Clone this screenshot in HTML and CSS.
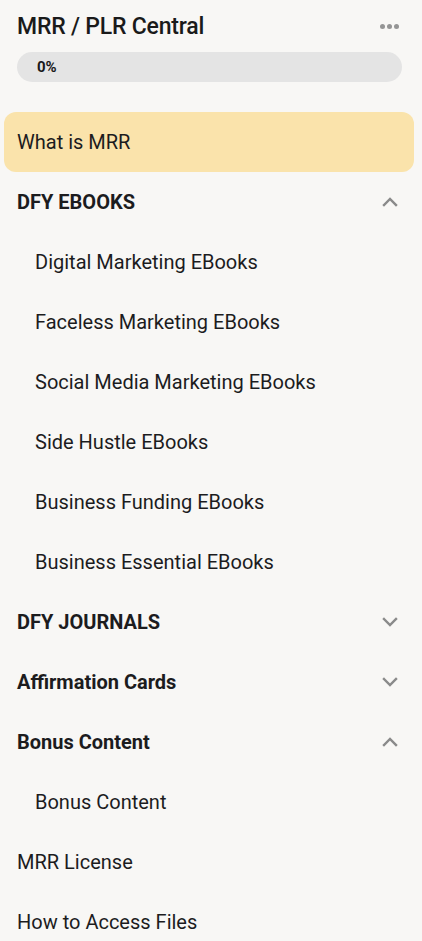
FILE: index.html
```html
<!DOCTYPE html>
<html>
<head>
<meta charset="utf-8">
<link rel="stylesheet" href="styles.css">
</head>
<body>
<div class="sidebar">
  <div class="header">
    <div class="title">MRR / PLR Central</div>
    <div class="more"><span></span><span></span><span></span></div>
  </div>
  <div class="progress"><span class="pct">0%</span></div>
  <nav class="nav">
    <div class="item active">What is MRR</div>
    <div class="item section"><span>DFY EBOOKS</span>
      <svg class="chev" viewBox="0 0 16 10" width="16" height="10"><path d="M2 8 L8 2 L14 8"/></svg>
    </div>
    <div class="item sub">Digital Marketing EBooks</div>
    <div class="item sub">Faceless Marketing EBooks</div>
    <div class="item sub">Social Media Marketing EBooks</div>
    <div class="item sub">Side Hustle EBooks</div>
    <div class="item sub">Business Funding EBooks</div>
    <div class="item sub">Business Essential EBooks</div>
    <div class="item section"><span>DFY JOURNALS</span>
      <svg class="chev" viewBox="0 0 16 10" width="16" height="10"><path d="M2 2 L8 8 L14 2"/></svg>
    </div>
    <div class="item section"><span>Affirmation Cards</span>
      <svg class="chev" viewBox="0 0 16 10" width="16" height="10"><path d="M2 2 L8 8 L14 2"/></svg>
    </div>
    <div class="item section"><span>Bonus Content</span>
      <svg class="chev" viewBox="0 0 16 10" width="16" height="10"><path d="M2 8 L8 2 L14 8"/></svg>
    </div>
    <div class="item sub">Bonus Content</div>
    <div class="item">MRR License</div>
    <div class="item">How to Access Files</div>
  </nav>
</div>
</body>
</html>
```
FILE: styles.css
```css
html, body {
  margin: 0;
  padding: 0;
  background: #f8f7f5;
}
body {
  font-family: Roboto, "Noto Sans", sans-serif;
  color: #1c1c1e;
}
.sidebar {
  width: 422px;
  box-sizing: border-box;
}
.header {
  display: flex;
  align-items: center;
  justify-content: space-between;
  padding: 10px 23px 0 17px;
  height: 32px;
}
.title {
  font-size: 23px;
  font-weight: 500;
  letter-spacing: -0.2px;
  color: #1a1a1a;
}
.more {
  display: flex;
  gap: 2px;
  padding-top: 0;
}
.more span {
  width: 5px;
  height: 5px;
  border-radius: 50%;
  background: #959595;
}
.progress {
  margin: 10px 20px 0 17px;
  height: 30px;
  border-radius: 15px;
  background: #e4e4e4;
  display: flex;
  align-items: center;
  padding-left: 20px;
}
.pct {
  font-size: 15px;
  font-weight: 700;
  color: #1a1a1a;
}
.nav {
  margin-top: 30px;
  display: flex;
  flex-direction: column;
}
.item {
  height: 60px;
  display: flex;
  align-items: center;
  justify-content: space-between;
  padding: 0 24px 0 17px;
  font-size: 20px;
  color: #1c1c1e;
}
.item.active {
  background: #fae3ab;
  border-radius: 12px;
  margin: 0 8px 0 4px;
  padding-left: 13px;
}
.item.section {
  font-weight: 700;
}
.item.sub {
  padding-left: 35px;
}
.chev {
  fill: none;
  stroke: #8a8a8a;
  stroke-width: 2.4;
  stroke-linecap: square;
}
```
